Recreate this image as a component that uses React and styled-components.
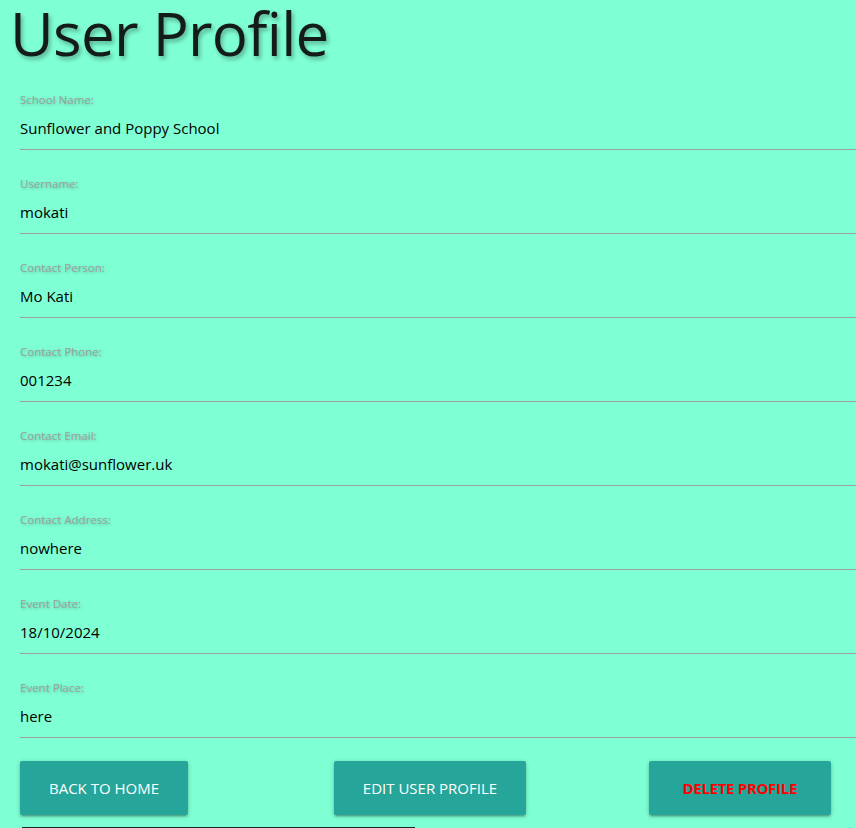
import React from "react";
import styled, { createGlobalStyle } from "styled-components";

const Global = createGlobalStyle`
  html, body { margin: 0; padding: 0; background: #7fffd4; }
  body { font-family: "Open Sans", "Noto Sans", sans-serif; overflow: hidden; }
`;

const Page = styled.div`
  background: #7fffd4;
  min-height: 828px;
  width: 856px;
`;

const Title = styled.h1`
  margin: 0;
  padding: 4px 0 0 10px;
  height: 62px;
  box-sizing: border-box;
  font-size: 60px;
  font-weight: 400;
  line-height: 58px;
  letter-spacing: -0.7px;
  color: #141c18;
  text-shadow: 2px 3px 4px rgba(0, 0, 0, 0.3);
  margin-bottom: 4px;
`;

const Form = styled.div`
  padding-left: 20px;
`;

const Field = styled.div`
  display: flex;
  flex-direction: column;
  padding: 26px 0 9px;
  border-bottom: 1px solid #9e9e9e;
`;

const Label = styled.span`
  font-size: 11.5px;
  line-height: 16px;
  color: #9e9e9e;
  text-shadow: 1px 1px 3px rgba(0, 0, 0, 0.25);
  margin-bottom: 8px;
`;

const Value = styled.span`
  font-size: 15px;
  line-height: 24px;
  color: #000;
`;

const Actions = styled.div`
  display: grid;
  grid-template-columns: 314fr auto 305fr;
  align-items: center;
  margin: 23px 25px 0 20px;
`;

const Button = styled.button`
  justify-self: ${(p) => p.$align};
  height: 54px;
  padding: 0 ${(p) => (p.$danger ? "34px" : "29px")};
  border: none;
  border-radius: 2px;
  background: #26a69a;
  color: ${(p) => (p.$danger ? "#ff0000" : "#fff")};
  font-family: "Open Sans", "Noto Sans", sans-serif;
  font-size: 15px;
  font-weight: ${(p) => (p.$danger ? 700 : 400)};
  text-transform: uppercase;
  letter-spacing: ${(p) => (p.$danger ? "-0.3px" : "0")};
  box-shadow: 0 2px 2px 0 rgba(0, 0, 0, 0.14), 0 3px 1px -2px rgba(0, 0, 0, 0.12),
    0 1px 5px 0 rgba(0, 0, 0, 0.2);
  cursor: pointer;
`;

const Footer = styled.div`
  margin: 12px 0 0 22px;
  width: 393px;
  border-top: 1px solid #1f2a25;
  height: 20px;
`;

const fields = [
  ["School Name:", "Sunflower and Poppy School"],
  ["Username:", "mokati"],
  ["Contact Person:", "Mo Kati"],
  ["Contact Phone:", "001234"],
  ["Contact Email:", "mokati@sunflower.uk"],
  ["Contact Address:", "nowhere"],
  ["Event Date:", "18/10/2024"],
  ["Event Place:", "here"],
];

export default function App() {
  return (
    <Page>
      <Global />
      <Title>User Profile</Title>
      <Form>
        {fields.map(([l, v]) => (
          <Field key={l}>
            <Label>{l}</Label>
            <Value>{v}</Value>
          </Field>
        ))}
      </Form>
      <Actions>
        <Button $align="start">Back to Home</Button>
        <Button $align="center">Edit User Profile</Button>
        <Button $align="end" $danger>Delete Profile</Button>
      </Actions>
      <Footer />
    </Page>
  );
}
